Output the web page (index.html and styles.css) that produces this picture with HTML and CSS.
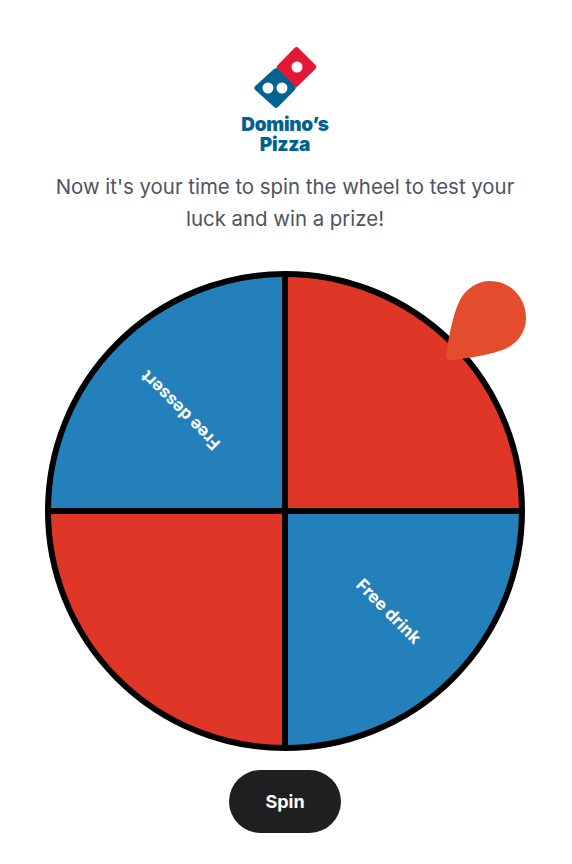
FILE: index.html
```html
<!DOCTYPE html>
<html lang="en">
<head>
<meta charset="utf-8">
<title>Spin the wheel</title>
<link rel="stylesheet" href="styles.css">
</head>
<body>
<main class="page">
  <div class="logo">
    <svg class="logo-mark" width="64" height="64" viewBox="0 0 64 64" aria-hidden="true">
      <path class="mark-red" d="M43 2.500 60 19.500a2.200 2.200 0 0 1 0 3.100L41.700 40.400a1.800 1.800 0 0 1-2.600 0L22.800 23a2.200 2.200 0 0 1 0-3L39.900 2.500a2.200 2.200 0 0 1 3.100 0Z"/>
      <circle class="mark-white" cx="42" cy="21" r="5.500"/>
      <path class="mark-blue" d="M22.300 23.400 39.400 40.700a2 2 0 0 1 0 2.800L22.600 60.600a2.200 2.200 0 0 1-3.100 0L.7 43.500a2.200 2.200 0 0 1 0-3.100L19.400 23.400a2 2 0 0 1 2.900 0Z"/>
      <circle class="mark-white" cx="13" cy="42" r="5.500"/>
      <circle class="mark-white" cx="27" cy="42" r="5.500"/>
    </svg>
    <div class="logo-name">Domino’s<br>Pizza</div>
  </div>
  <p class="intro">Now it's your time to spin the wheel to test your luck and win a prize!</p>
  <div class="wheel-wrap">
    <svg class="wheel" width="480" height="480" viewBox="0 0 480 480">
      <path class="seg-red" d="M240 240V3A237 237 0 0 1 477 240Z"/>
      <path class="seg-blue" d="M240 240H477A237 237 0 0 1 240 477Z"/>
      <path class="seg-red" d="M240 240V477A237 237 0 0 1 3 240Z"/>
      <path class="seg-blue" d="M240 240H3A237 237 0 0 1 240 3Z"/>
      <path class="seg-line" d="M240 3V477M3 240H477"/>
      <circle class="seg-ring" cx="240" cy="240" r="237"/>
      <text class="seg-label" text-anchor="middle" transform="translate(339.500 344.500) rotate(45)">Free drink</text>
      <text class="seg-label" text-anchor="middle" transform="translate(139.500 135) rotate(225)">Free dessert</text>
    </svg>
    <svg class="pointer" width="90" height="90" viewBox="0 0 90 90" aria-hidden="true">
      <path d="M1 79C4 59 8 39 14 26 20 13 32 5 45 5 65 5 81 21 81 42 81 56 73 67 60 73 45 79 25 82 6 84 2 84.500 .5 82 1 79Z"/>
    </svg>
  </div>
  <button class="spin" type="button">Spin</button>
</main>
</body>
</html>
```

FILE: styles.css
```css
* { box-sizing: border-box; }
html, body { margin: 0; padding: 0; background: #fff; }
body { font-family: Inter, "Liberation Sans", sans-serif; }
.page {
  width: 570px;
  height: 864px;
  overflow: hidden;
  display: flex;
  flex-direction: column;
  align-items: center;
  padding-top: 46px;
}
.logo {
  display: flex;
  flex-direction: column;
  align-items: center;
  height: 109px;
}
.logo-mark { display: block; margin-left: 4px; overflow: visible; }
.logo-name {
  margin-top: 5px;
  font-family: Inter, sans-serif;
  font-weight: 900;
  font-size: 19px;
  line-height: 20px;
  letter-spacing: -0.3px;
  text-align: center;
  color: #00628f;
}
.mark-red { fill: #e31837; stroke: #e31837; stroke-width: 1.2; stroke-linejoin: round; }
.mark-blue { fill: #00628f; stroke: #00628f; stroke-width: 1.2; stroke-linejoin: round; }
.mark-white { fill: #fff; }
.intro {
  width: 480px;
  margin: 16px 0 0;
  font-size: 20.4px;
  line-height: 32px;
  text-align: center;
  color: #4b5563;
}
.wheel-wrap {
  position: relative;
  width: 480px;
  height: 480px;
  margin-top: 36px;
}
.wheel { display: block; }
.seg-red { fill: #df3627; }
.seg-blue { fill: #2380ba; }
.seg-line, .seg-ring { fill: none; stroke: #000; stroke-width: 6; }
.seg-label { fill: #fff; font-family: Inter, sans-serif; font-weight: 700; font-size: 17px; }
.pointer { position: absolute; left: 400px; top: 5px; }
.pointer path { fill: #e34c2c; }
.spin {
  width: 112px;
  height: 63px;
  margin-top: 19px;
  border: 0;
  border-radius: 32px;
  background: #1f1f21;
  color: #fff;
  font-family: Inter, sans-serif;
  font-weight: 700;
  font-size: 18px;
}
```
